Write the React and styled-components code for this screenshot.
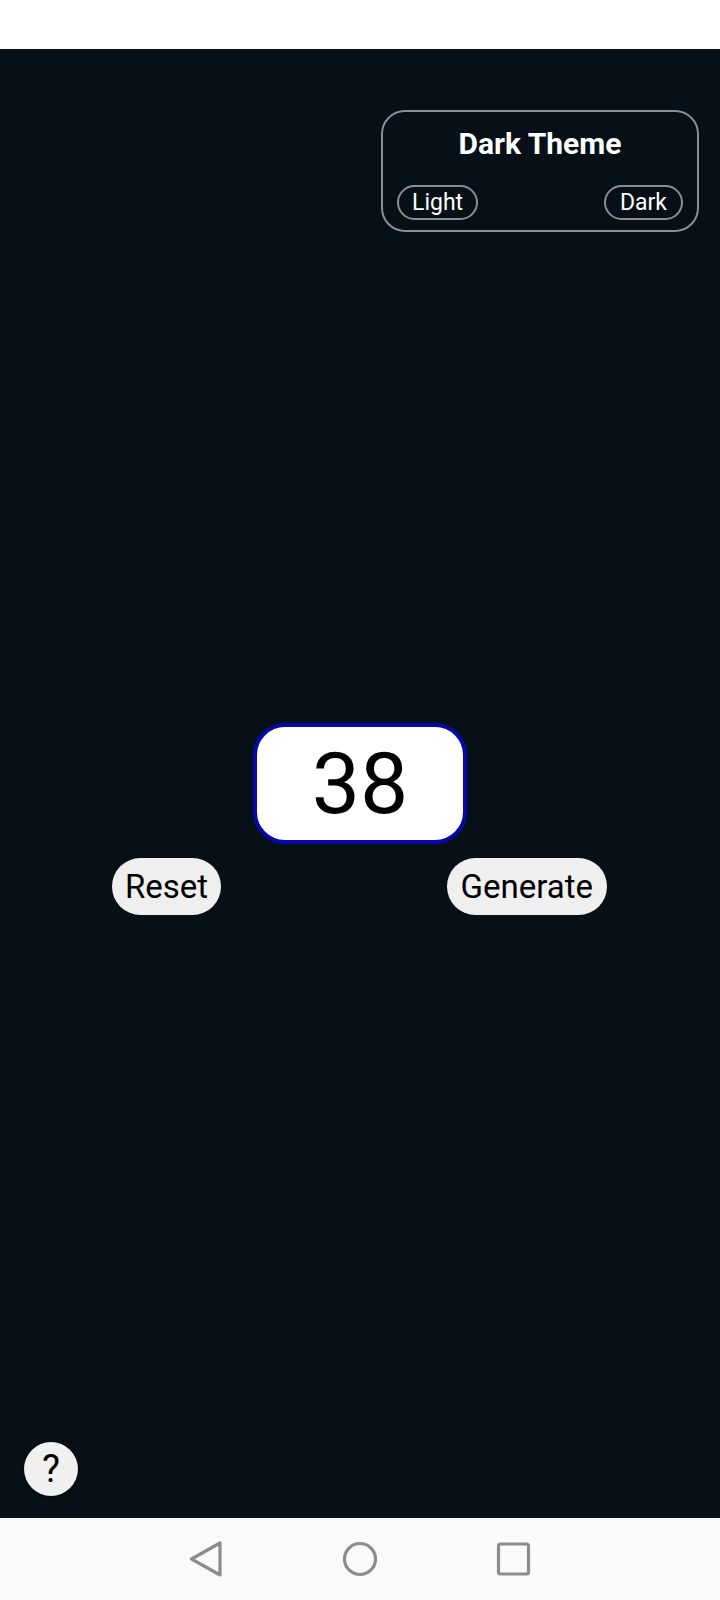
import React, { useState } from 'react';
import styled, { createGlobalStyle } from 'styled-components';

const GlobalStyle = createGlobalStyle`
  html, body {
    margin: 0;
    padding: 0;
    background: #ffffff;
  }
  body {
    font-family: Roboto, "Noto Sans", "Liberation Sans", sans-serif;
  }
  * {
    box-sizing: border-box;
  }
`;

const Screen = styled.div`
  width: 720px;
  height: 1600px;
  display: flex;
  flex-direction: column;
  overflow: hidden;
`;

const StatusBar = styled.div`
  height: 49px;
  flex: none;
  background: #ffffff;
`;

/* three rows: the number box sits in the middle one, so it stays centred */
const Main = styled.main`
  flex: 1;
  background: #061016;
  display: grid;
  grid-template-rows: minmax(0, 1fr) auto minmax(0, 1fr);
  justify-items: center;
`;

const Header = styled.div`
  justify-self: stretch;
  display: flex;
  justify-content: flex-end;
  align-items: flex-start;
  padding: 61px 21px 0 0;
`;

const ThemePanel = styled.div`
  width: 318px;
  height: 122px;
  border: 2px solid #8e8e8e;
  border-radius: 24px;
  padding: 14px 14px 0 14px;
  display: flex;
  flex-direction: column;
  color: #ffffff;
`;

const ThemeTitle = styled.div`
  text-align: center;
  font-size: 30px;
  font-weight: 700;
  line-height: 36px;
`;

const PillRow = styled.div`
  display: flex;
  justify-content: space-between;
  margin-top: 23px;
`;

const Pill = styled.button`
  height: 35px;
  min-width: 79px;
  padding: 0 13px;
  border: 2px solid #8e8e8e;
  border-radius: 18px;
  background: transparent;
  color: #ffffff;
  font-family: inherit;
  font-size: 23px;
  line-height: 1;
  cursor: pointer;
`;

const NumberBox = styled.div`
  width: 214px;
  height: 121px;
  background: #ffffff;
  border: 4px solid #0808aa;
  border-radius: 32px;
  display: flex;
  align-items: center;
  justify-content: center;
  color: #000000;
  font-size: 86px;
  line-height: 1;
`;

const Footer = styled.div`
  justify-self: stretch;
  display: flex;
  flex-direction: column;
  padding: 14px 0 22px 0;
`;

const ActionRow = styled.div`
  display: flex;
  justify-content: space-between;
  padding: 0 113px 0 112px;
`;

const ActionButton = styled.button`
  height: 57px;
  padding: 0 ${({ $pad }) => $pad}px;
  border: none;
  border-radius: 29px;
  background: #efefef;
  color: #000000;
  font-family: inherit;
  font-size: 33px;
  cursor: pointer;
`;

const HelpButton = styled.button`
  margin-top: auto;
  margin-left: 24px;
  width: 54px;
  height: 54px;
  border: none;
  border-radius: 50%;
  background: #f0f0f0;
  box-shadow: 0 1px 3px rgba(0, 0, 0, 0.6);
  color: #000000;
  font-family: inherit;
  font-size: 38px;
  line-height: 1;
  display: flex;
  align-items: center;
  justify-content: center;
  padding: 0;
`;

const NavBar = styled.nav`
  height: 82px;
  flex: none;
  background: #fafafa;
  display: flex;
  align-items: center;
  justify-content: center;
  gap: 114px;
`;

const NavIcon = styled.svg`
  width: 40px;
  height: 40px;
  stroke: #8c8c8c;
  stroke-width: 3.2;
  fill: none;
  stroke-linejoin: round;
`;

export default function App() {
  const [value, setValue] = useState(38);

  return (
    <>
      <GlobalStyle />
      <Screen>
        <StatusBar />
        <Main>
          <Header>
            <ThemePanel>
              <ThemeTitle>Dark Theme</ThemeTitle>
              <PillRow>
                <Pill>Light</Pill>
                <Pill>Dark</Pill>
              </PillRow>
            </ThemePanel>
          </Header>
          <NumberBox>{value}</NumberBox>
          <Footer>
            <ActionRow>
              <ActionButton $pad={13} onClick={() => setValue(0)}>Reset</ActionButton>
              <ActionButton $pad={14} onClick={() => setValue(Math.floor(Math.random() * 100))}>
                Generate
              </ActionButton>
            </ActionRow>
            <HelpButton>?</HelpButton>
          </Footer>
        </Main>
        <NavBar>
          <NavIcon viewBox="0 0 40 40">
            <path d="M5.5 20 L34 4 L34 36 Z" />
          </NavIcon>
          <NavIcon viewBox="0 0 40 40">
            <circle cx="20" cy="20" r="15.5" />
          </NavIcon>
          <NavIcon viewBox="0 0 40 40">
            <rect x="4.5" y="5" width="30" height="30" rx="2" />
          </NavIcon>
        </NavBar>
      </Screen>
    </>
  );
}
